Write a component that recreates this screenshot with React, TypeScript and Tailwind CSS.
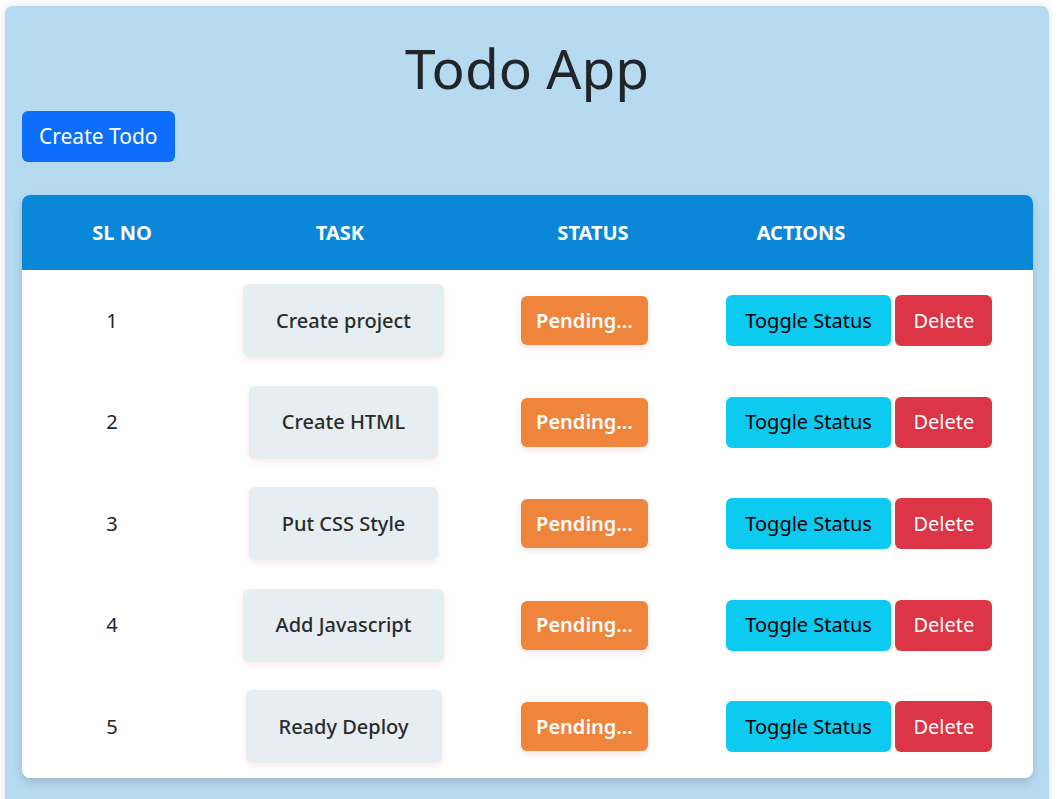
import React from "react";

const todos = ["Create project", "Create HTML", "Put CSS Style", "Add Javascript", "Ready Deploy"];

export default function App() {
  return (
    <div className="min-h-[799px] bg-white pt-[6px] pl-[5px]" style={{ fontFamily: '"Noto Sans", "Open Sans", sans-serif' }}>
      <div className="w-[1044px] rounded-lg bg-[#b6daef] px-[17px] pb-[40px] pt-[24px] shadow-[0_0_8px_rgba(0,0,0,0.12)]">
        <h1 className="text-center text-[55px] leading-[76px] font-normal text-[#212529]">Todo App</h1>
        <div className="mt-[5px]">
          <button className="h-[51px] rounded-md bg-[#0d6efd] px-[17px] text-[21px] text-white">Create Todo</button>
        </div>
        <div className="mt-[33px] w-[1011px] overflow-hidden rounded-lg bg-white shadow-[0_4px_10px_rgba(0,0,0,0.15)]">
          <div className="grid h-[75px] grid-cols-[200px_236px_270px_146px_1fr] items-center bg-[#0a87d8] text-[20px] font-bold text-white">
            <div className="text-center">SL NO</div>
            <div className="text-center">TASK</div>
            <div className="text-center">STATUS</div>
            <div className="text-center">ACTIONS</div>
            <div />
          </div>
          {todos.map((t, i) => (
            <div key={t} className="grid h-[101.5px] grid-cols-[180px_283px_199px_1fr] items-center">
              <div className="text-center text-[20px] text-[#212529]">{i + 1}</div>
              <div className="flex justify-center">
                <div className="flex h-[73px] items-center rounded-md bg-[#e6eef1] px-[33px] text-[20px] font-medium text-[#2b2b2b] shadow-[0_3px_6px_rgba(220,120,120,0.15)]">{t}</div>
              </div>
              <div className="flex justify-center">
                <div className="flex h-[49px] items-center rounded-md bg-[#ef853d] px-[15px] text-[20px] font-semibold text-white shadow-[0_3px_6px_rgba(220,120,120,0.2)]">Pending...</div>
              </div>
              <div className="flex justify-center gap-[4px] pl-[1px]">
                <button className="h-[51px] rounded-md bg-[#0dcaf0] px-[19.5px] text-[20px] text-black">Toggle Status</button>
                <button className="h-[51px] rounded-md bg-[#dc3545] px-[18px] text-[20px] text-white">Delete</button>
              </div>
            </div>
          ))}
        </div>
      </div>
    </div>
  );
}
